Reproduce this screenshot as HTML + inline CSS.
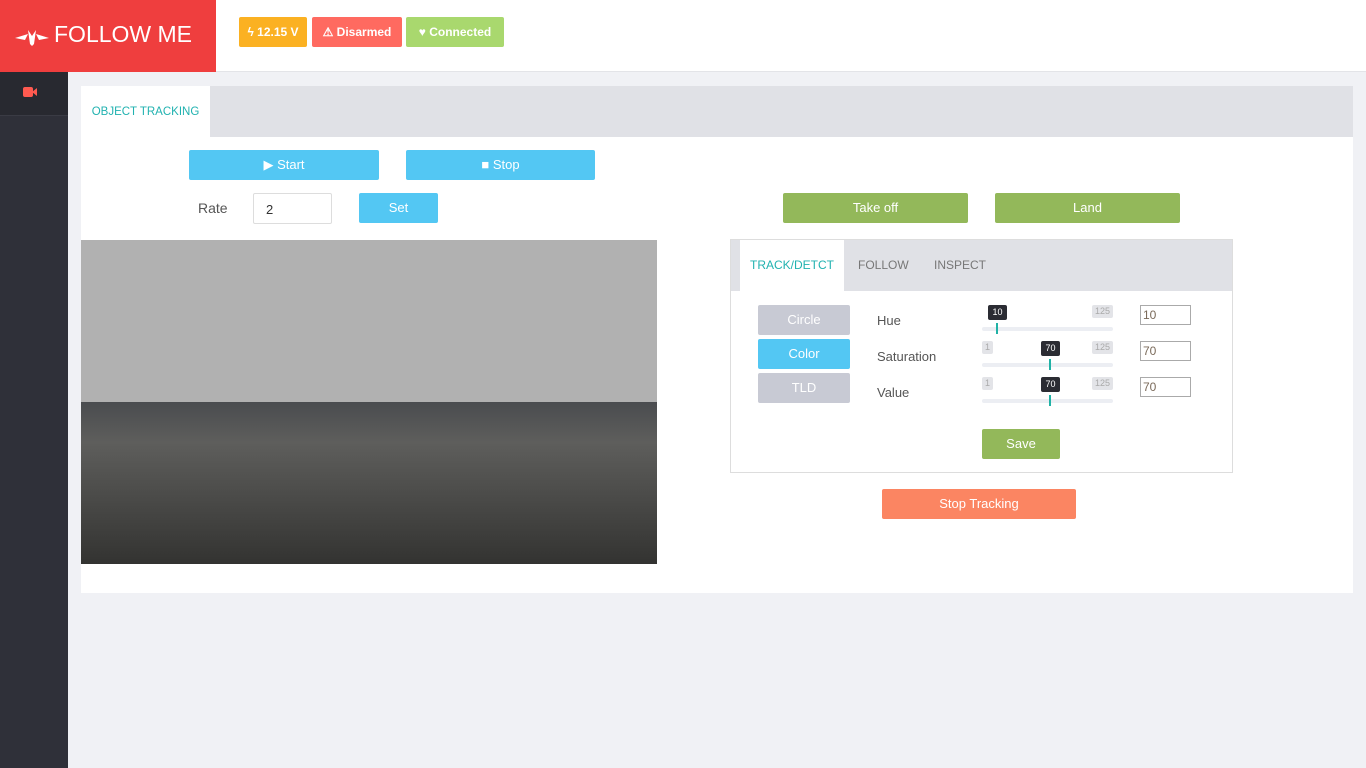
<!DOCTYPE html><html><head><style>
*{margin:0;padding:0;box-sizing:border-box}
body{width:1366px;height:768px;background:#f0f1f5;font-family:"Liberation Sans",sans-serif;position:relative;overflow:hidden;font-size:13px}
.a{position:absolute}
.btn{position:absolute;color:#fff;text-align:center;border-radius:2px;font-size:13px}
.badge{position:absolute;top:17px;height:30px;line-height:30px;color:#fff;font-weight:bold;font-size:12px;border-radius:2px;text-align:center}
.lbl{position:absolute;color:#555;font-size:13px}
.tip{position:absolute;background:#2b2c33;color:#fff;font-size:9px;border-radius:2px;text-align:center;height:15px;line-height:15px}
.gt{position:absolute;background:#e3e4e8;color:#aaa;font-size:9px;border-radius:2px;text-align:center;height:13px;line-height:13px}
.trk{position:absolute;height:4px;background:#eceef3;border-radius:2px;width:131px;left:982px}
.hd{position:absolute;width:2px;height:11px;background:#21b2a6}
.inp{position:absolute;left:1140px;width:51px;height:20px;border:1px solid #aaa;background:#fff;color:#7a6a5a;font-size:12px;line-height:18px;padding-left:2px}
</style></head><body>
<div class="a" style="left:0;top:0;width:1366px;height:72px;background:#fff;border-bottom:1px solid #e3e4e8"></div>
<div class="a" style="left:0;top:0;width:216px;height:72px;background:#ef3e3e"></div>
<svg class="a" style="left:15px;top:26px" width="34" height="22" viewBox="0 0 34 22"><path d="M0 12 L13 8 L10 14 Z M34 12 L21 8 L24 14Z M13 4 L17 10 L21 4 L19 18 L17 20 L15 18Z" fill="#fff"/></svg>
<div class="a" style="left:54px;top:21px;color:#fff;font-size:23px">FOLLOW ME</div>
<div class="badge" style="left:239px;width:68px;background:#fbb122">ϟ 12.15 V</div>
<div class="badge" style="left:312px;width:90px;background:#ff6a60">⚠ Disarmed</div>
<div class="badge" style="left:406px;width:98px;background:#a9d86e">♥ Connected</div>
<div class="a" style="left:0;top:72px;width:68px;height:696px;background:#2f3039"></div>
<div class="a" style="left:0;top:72px;width:68px;height:44px;background:#282930;border-bottom:1px solid #3a3b44"></div>
<div class="a" style="left:23px;top:87px;width:10px;height:10px;background:#ff5a50;border-radius:2px"></div>
<div class="a" style="left:32px;top:88px;width:0;height:0;border-top:4px solid transparent;border-bottom:4px solid transparent;border-right:5px solid #ff5a50"></div>
<div class="a" style="left:81px;top:86px;width:1272px;height:507px;background:#fff"></div>
<div class="a" style="left:81px;top:86px;width:1272px;height:51px;background:#e0e1e6"></div>
<div class="a" style="left:81px;top:86px;width:129px;height:51px;background:#fff;color:#21b2b0;font-size:11.5px;line-height:52px;text-align:center">OBJECT TRACKING</div>
<div class="btn" style="left:189px;top:150px;width:190px;height:30px;line-height:30px;background:#53c7f3">▶ Start</div>
<div class="btn" style="left:406px;top:150px;width:189px;height:30px;line-height:30px;background:#53c7f3">■ Stop</div>
<div class="lbl" style="left:198px;top:200px;font-size:14px">Rate</div>
<div class="a" style="left:253px;top:193px;width:79px;height:31px;border:1px solid #ddd;border-radius:2px;padding:8px 12px;font-size:13px;color:#333">2</div>
<div class="btn" style="left:359px;top:193px;width:79px;height:30px;line-height:30px;background:#53c7f3">Set</div>
<div class="btn" style="left:783px;top:193px;width:185px;height:30px;line-height:30px;background:#93b85a">Take off</div>
<div class="btn" style="left:995px;top:193px;width:185px;height:30px;line-height:30px;background:#93b85a">Land</div>
<div class="a" style="left:81px;top:240px;width:576px;height:163px;background:#b1b1b1"></div>
<div class="a" style="left:81px;top:402px;width:576px;height:162px;background:linear-gradient(#4a4c4f,#5e5e5c 25%,#4a4a48 60%,#333331)"></div>
<div class="a" style="left:730px;top:239px;width:503px;height:234px;border:1px solid #ddd;background:#fff"></div>
<div class="a" style="left:731px;top:240px;width:501px;height:51px;background:#e0e1e6"></div>
<div class="a" style="left:740px;top:240px;width:104px;height:51px;background:#fff;color:#21b2b0;font-size:12px;line-height:51px;text-align:center">TRACK/DETCT</div>
<div class="a" style="left:858px;top:258px;color:#777;font-size:12px">FOLLOW</div>
<div class="a" style="left:934px;top:258px;color:#777;font-size:12px">INSPECT</div>
<div class="btn" style="left:758px;top:305px;width:92px;height:30px;line-height:30px;background:#c8cad4">Circle</div>
<div class="btn" style="left:758px;top:339px;width:92px;height:30px;line-height:30px;background:#53c7f3">Color</div>
<div class="btn" style="left:758px;top:373px;width:92px;height:30px;line-height:30px;background:#c8cad4">TLD</div>
<div class="lbl" style="left:877px;top:313px">Hue</div>
<div class="lbl" style="left:877px;top:349px">Saturation</div>
<div class="lbl" style="left:877px;top:385px">Value</div>
<div class="tip" style="left:988px;top:305px;width:19px">10</div><div class="gt" style="left:1092px;top:305px;width:21px">125</div>
<div class="trk" style="top:327px"></div><div class="hd" style="left:996px;top:323px"></div>
<div class="gt" style="left:982px;top:341px;width:11px">1</div><div class="tip" style="left:1041px;top:341px;width:19px">70</div><div class="gt" style="left:1092px;top:341px;width:21px">125</div>
<div class="trk" style="top:363px"></div><div class="hd" style="left:1049px;top:359px"></div>
<div class="gt" style="left:982px;top:377px;width:11px">1</div><div class="tip" style="left:1041px;top:377px;width:19px">70</div><div class="gt" style="left:1092px;top:377px;width:21px">125</div>
<div class="trk" style="top:399px"></div><div class="hd" style="left:1049px;top:395px"></div>
<div class="inp" style="top:305px">10</div>
<div class="inp" style="top:341px">70</div>
<div class="inp" style="top:377px">70</div>
<div class="btn" style="left:982px;top:429px;width:78px;height:30px;line-height:30px;background:#93b85a">Save</div>
<div class="btn" style="left:882px;top:489px;width:194px;height:30px;line-height:30px;background:#fb8562">Stop Tracking</div>
</body></html>
